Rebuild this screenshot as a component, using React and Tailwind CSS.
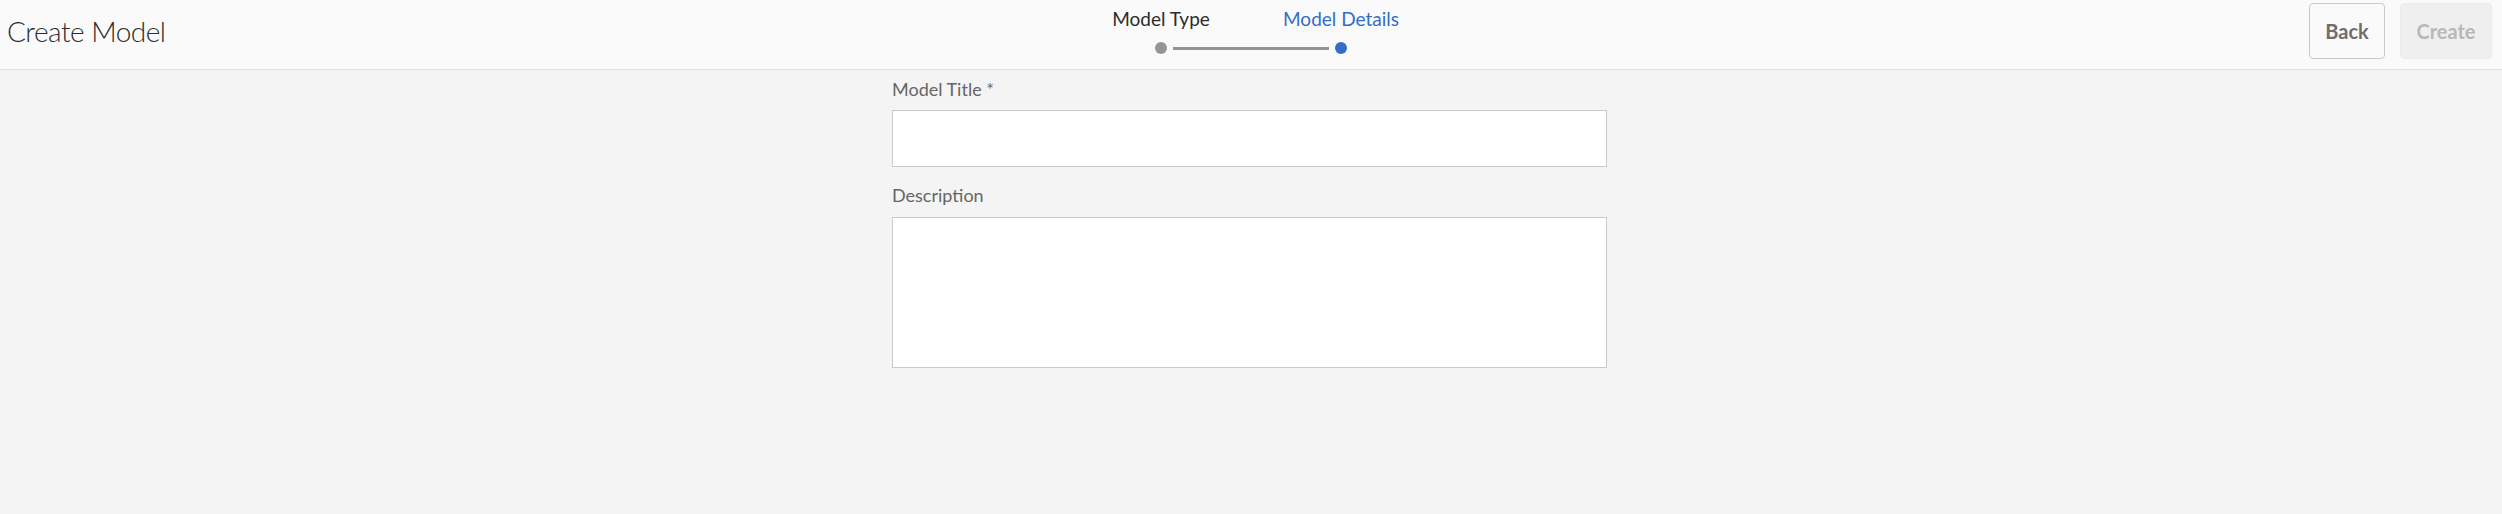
import React from "react";

export default function App() {
  const font = { fontFamily: "Lato, 'Open Sans', sans-serif" };
  return (
    <div className="min-h-screen flex flex-col bg-[#f4f4f4]" style={font}>
      <header className="h-[70px] bg-[#fafafa] border-b border-[#e1e1e1] grid grid-cols-[1fr_auto_1fr] items-start">
        <div className="pl-[7px] pt-[13px] text-[28px] leading-[36px] tracking-[-0.5px] font-light text-[#2c2c2c]">
          Create Model
        </div>
        <div className="pt-[7px] w-[360px] flex flex-col">
          <div className="flex">
            <div className="w-[180px] text-center text-[19px] leading-[24px] text-[#2c2c2c]">Model Type</div>
            <div className="w-[180px] text-center text-[19px] leading-[24px] text-[#326ec8]">Model Details</div>
          </div>
          <div className="mt-[11px] px-[84px] flex items-center gap-[6px]">
            <div className="w-[12px] h-[12px] rounded-full bg-[#959595]" />
            <div className="flex-1 h-[3px] bg-[#959595]" />
            <div className="w-[12px] h-[12px] rounded-full bg-[#326ec8]" />
          </div>
        </div>
        <div className="flex justify-end gap-[15px] pt-[3px] pr-[10px]">
          <button className="w-[76px] h-[56px] rounded-[4px] border border-[#cacaca] bg-[#fafafa] text-[20px] font-bold text-[#6e6e6e]">
            Back
          </button>
          <button className="w-[92px] h-[56px] rounded-[4px] border border-[#ebebeb] bg-[#efefef] text-[20px] font-bold text-[#b8b8b8]">
            Create
          </button>
        </div>
      </header>
      <main className="flex-1 flex justify-center">
        <div className="w-[715px] mr-[3px] pt-[7px] flex flex-col">
          <label className="text-[18px] leading-[24px] text-[#666666]">Model Title *</label>
          <input className="mt-[9px] h-[57px] bg-white border border-[#cacaca] outline-none" />
          <label className="mt-[16px] text-[18px] leading-[24px] text-[#666666]">Description</label>
          <textarea className="mt-[10px] h-[151px] bg-white border border-[#cacaca] outline-none resize-none" />
        </div>
      </main>
    </div>
  );
}
